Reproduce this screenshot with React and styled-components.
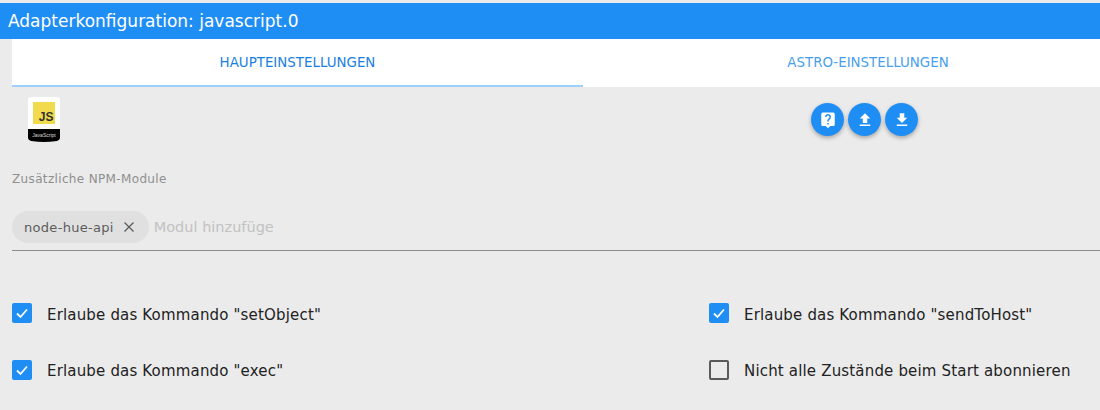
import React from 'react';
import styled, { createGlobalStyle } from 'styled-components';

const Global = createGlobalStyle`
  html, body { margin: 0; padding: 0; background: #ebebeb; overflow: hidden; }
  body { font-family: "DejaVu Sans", "Open Sans", sans-serif; }
`;
const Page = styled.div`
  width: 1100px; height: 410px; padding-top: 3px; box-sizing: border-box; overflow: hidden;
`;
const Header = styled.div`
  height: 36px; background: #1f8ef4; color: #fff; font-size: 17px; line-height: 36px; padding-left: 8px; white-space: nowrap;
`;
const Content = styled.div`
  padding-left: 12px;
`;
const Tabs = styled.div`
  display: grid; grid-template-columns: 571px 570px; height: 48px; background: #fff;
`;
const Tab = styled.div`
  display: flex; align-items: center; justify-content: center; font-size: 13.4px;
  color: ${p => (p.$active ? '#1a7fe0' : '#4a9fec')};
  box-sizing: border-box; height: 48px;
  border-bottom: 2px solid ${p => (p.$active ? '#9fd0fb' : 'transparent')};
`;
const Top = styled.div`
  display: grid; grid-template-columns: 799px auto; height: 66px; align-items: start;
`;
const Logo = styled.svg`
  display: block; margin: 10px 0 0 16px; width: 32px; height: 46px;
`;
const Actions = styled.div`
  display: flex; gap: 4px; margin-top: 16px;
`;
const Fab = styled.div`
  width: 33px; height: 33px; border-radius: 50%; background: #1f8ef4; display: flex; align-items: center; justify-content: center;
  box-shadow: 0 2px 4px rgba(0,0,0,.3);
`;
const Label = styled.div`
  font-size: 12px; letter-spacing: .35px; color: #8f8f8f; line-height: 14px; margin-top: 19px; white-space: nowrap;
`;
const InputRow = styled.div`
  display: flex; align-items: center; height: 32px; margin-top: 25px; padding-bottom: 7px; border-bottom: 1px solid #8c8c8c;
`;
const Chip = styled.div`
  display: flex; align-items: center; height: 32px; border-radius: 16px; background: #e0e0e0; color: #5c5c5c; font-size: 13px; letter-spacing: .3px;
  padding: 0 14px 0 12px; gap: 9px; white-space: nowrap;
`;
const Placeholder = styled.div`
  margin-left: 5px; font-size: 14.5px; color: #c2c2c2; width: 120px; overflow: hidden; white-space: nowrap;
`;
const Options = styled.div`
  display: grid; grid-template-columns: 697px 1fr; grid-auto-rows: 56.5px; margin-top: 34px;
`;
const Option = styled.div`
  display: flex; align-items: center; gap: 15px; font-size: 15px; letter-spacing: .17px; color: #222; white-space: nowrap;
`;
const OptionText = styled.span`
  padding-top: 3px;
`;
const Box = styled.div`
  width: 20px; height: 20px; box-sizing: border-box; border-radius: 2px; display: flex; align-items: center; justify-content: center;
  background: ${p => (p.$checked ? '#1f8ef4' : 'transparent')};
  border: ${p => (p.$checked ? 'none' : '2px solid #5a5a5a')};
`;

const Check = () => (
  <Box $checked>
    <svg width="14" height="14" viewBox="0 0 14 14" fill="none" stroke="#fff" strokeWidth="1.8"><path d="M2 7.5 L5.5 11 L12 3.5" /></svg>
  </Box>
);

const OptionItem = ({ checked, children }) => (
  <Option>{checked ? <Check /> : <Box />}<OptionText>{children}</OptionText></Option>
);

export default function App() {
  return (
    <Page>
      <Global />
      <Header>Adapterkonfiguration: javascript.0</Header>
      <Content>
        <Tabs>
          <Tab $active>HAUPTEINSTELLUNGEN</Tab>
          <Tab>ASTRO-EINSTELLUNGEN</Tab>
        </Tabs>
        <Top>
          <Logo viewBox="0 0 32 46">
            <path d="M3 0H29Q32 0 32 3V41Q32 43 29 44Q16 46 3 44Q0 43 0 41V3Q0 0 3 0Z" fill="#fff" />
            <path d="M0 32H32V41Q32 43 29 44Q16 46 3 44Q0 43 0 41Z" fill="#000" />
            <rect x="5" y="5" width="22" height="22" fill="#f0db4f" />
            <text x="25.5" y="24" textAnchor="end" fontSize="12" fontWeight="700" fill="#323330" fontFamily="Liberation Sans">JS</text>
            <text x="16" y="39.5" textAnchor="middle" fontSize="5" fill="#ddd" fontFamily="Liberation Sans">JavaScript</text>
          </Logo>
          <Actions>
            <Fab>
              <svg width="18" height="18" viewBox="0 0 24 24" fill="#fff"><path d="M19 2H5a2 2 0 0 0-2 2v14a2 2 0 0 0 2 2h4l3 3 3-3h4a2 2 0 0 0 2-2V4a2 2 0 0 0-2-2zm-6 16h-2v-2h2v2zm2.07-7.75-.9.92C13.45 11.9 13 12.5 13 14h-2v-.5c0-1.1.45-2.1 1.17-2.83l1.24-1.26c.37-.36.59-.86.59-1.41 0-1.1-.9-2-2-2s-2 .9-2 2H8c0-2.21 1.79-4 4-4s4 1.79 4 4c0 .88-.36 1.68-.93 2.25z" /></svg>
            </Fab>
            <Fab>
              <svg width="18" height="18" viewBox="0 0 24 24" fill="#fff"><path d="M9 16h6v-6h4l-7-7-7 7h4zm-4 2h14v2H5z" /></svg>
            </Fab>
            <Fab>
              <svg width="18" height="18" viewBox="0 0 24 24" fill="#fff"><path d="M19 9h-4V3H9v6H5l7 7 7-7zM5 18v2h14v-2H5z" /></svg>
            </Fab>
          </Actions>
        </Top>
        <Label>Zusätzliche NPM-Module</Label>
        <InputRow>
          <Chip>
            node-hue-api
            <svg width="12" height="12" viewBox="0 0 12 12" stroke="#5c5c5c" strokeWidth="1.3"><path d="M1.5 1.5 10.5 10.5M10.5 1.5 1.5 10.5" /></svg>
          </Chip>
          <Placeholder>Modul hinzufüge</Placeholder>
        </InputRow>
        <Options>
          <OptionItem checked>Erlaube das Kommando "setObject"</OptionItem>
          <OptionItem checked>Erlaube das Kommando "sendToHost"</OptionItem>
          <OptionItem checked>Erlaube das Kommando "exec"</OptionItem>
          <OptionItem>Nicht alle Zustände beim Start abonnieren</OptionItem>
        </Options>
      </Content>
    </Page>
  );
}
